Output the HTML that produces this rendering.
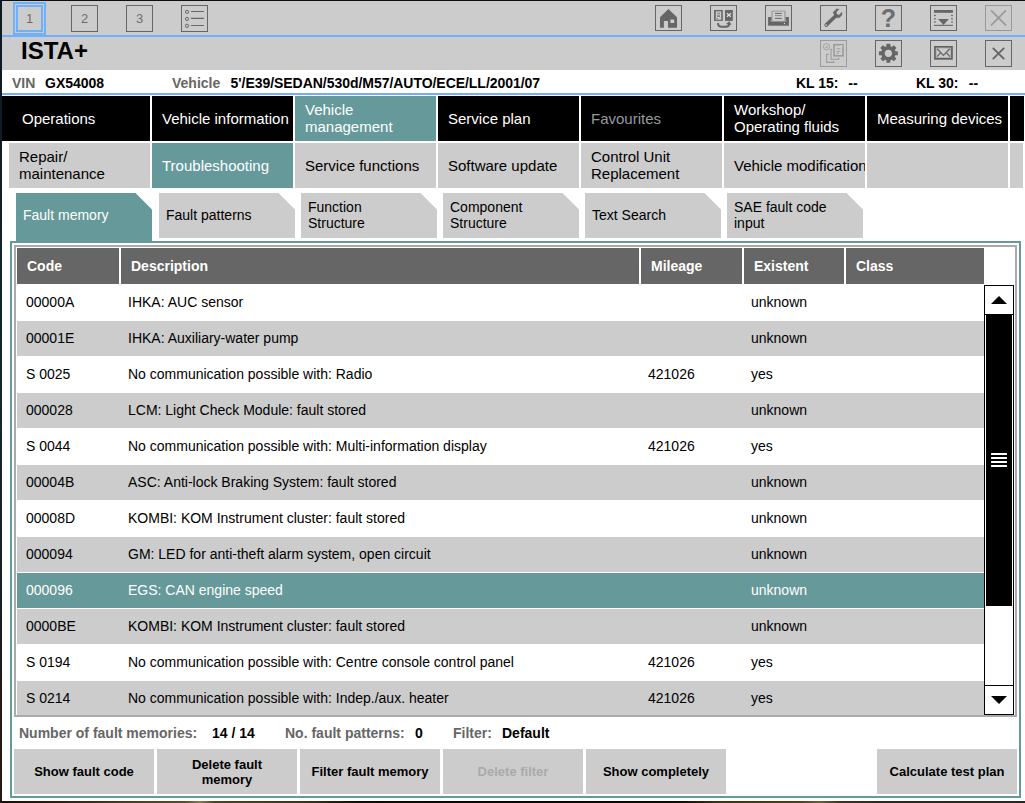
<!DOCTYPE html>
<html><head><meta charset="utf-8">
<style>
*{box-sizing:border-box;margin:0;padding:0}
html,body{width:1025px;height:803px;overflow:hidden;background:#fff}
body{position:relative;font-family:"Liberation Sans",Arial,sans-serif;color:#000;font-size:15px}
.abs{position:absolute}
#deskT{left:0;top:0;width:1025px;height:1px;background:#0a0f14}
#deskL{left:0;top:0;width:2px;height:803px;background:linear-gradient(180deg,#0e1820,#16262e 50%,#1c1c1c 80%,#26170f)}
#deskB{left:0;top:801px;width:1025px;height:2px;background:linear-gradient(90deg,#1a0f0a 0,#2a1c12 5%,#4a3a26 12%,#5a4a30 18%,#8a7a50 19.5%,#4a4428 21%,#36361e 30%,#0c0c08 35%,#060606 50%,#0a0a06 66%,#3a3418 70%,#4a4020 78%,#6a6038 80%,#3a3420 82%,#2a2a26 86%,#262624 100%)}
#top{left:2px;top:1px;width:1023px;height:69px;background:#ccc}
.bl{left:2px;width:1023px;height:2px;background:#6eb0fa}
.tb{position:absolute;width:27px;height:27px;border:1px solid #666;color:#6e6e6e;font-size:13px;text-align:center;line-height:26px}
.tb svg{position:absolute;left:-1px;top:-1px}
.tb.r1{top:5px;height:26px}
.tb.r2{top:40px}
#vin{left:2px;top:70px;width:1023px;height:24px;background:#fff;font-weight:bold;font-size:14px;line-height:26px}
#vin span{position:absolute;top:0;white-space:nowrap}
#vin .g{color:#666}
.n1,.n2{position:absolute;display:flex;align-items:center;line-height:17px;font-size:15px;white-space:nowrap}
.n1{top:96px;height:45px;background:#000;color:#fff;padding-left:20px;padding-bottom:2px}
.n2{top:143px;height:45px;background:#ccc;color:#000;padding-left:10px;padding-bottom:2px}
.sel{background:#669999 !important;color:#fff !important}
.tab{position:absolute;top:193px;height:45px;width:136px;background:#ccc;display:flex;align-items:center;padding-left:7px;font-size:14px;line-height:16px;white-space:nowrap;padding-bottom:2px;clip-path:polygon(0 0,119.5px 0,100% 16.5px,100% 100%,0 100%)}
.tab.sel{height:49px;padding-bottom:6px}
#panel{left:10px;top:241px;width:1011px;height:557px;border:2px solid #669999;background:#fff}
#tbl{left:14px;top:245px;width:1003px;height:472px;border:2px solid #aaa;background:#fff}
.th{position:absolute;top:248px;height:36px;background:#666;color:#fff;font-weight:bold;font-size:14px;line-height:36px;padding-left:10px}
.row{position:absolute;left:17px;width:967px;height:35px;font-size:14px;line-height:35px;white-space:nowrap}
.row.g{background:#ccc}
.row.s{background:#669999;color:#fff}
.row span{position:absolute;top:0}
.c1{left:9px}.c2{left:111px}.c3{left:631px}.c4{left:734px}
#sb{left:984px;top:285px;width:30px;height:430px;background:#fff;border:1px solid #000}
#st{left:986px;top:314px;width:26px;height:292px;background:#000}
.sbtn{position:absolute;left:984px;width:30px;height:30px;border:1px solid #000;background:#fff}
#stat{left:0;top:723px;width:1025px;height:20px;font-size:14px;font-weight:bold;line-height:20px}
#stat span{position:absolute;top:0;white-space:nowrap}
#stat .g{color:#666}
.btn{position:absolute;top:749px;height:45px;width:140px;background:#ccc;font-weight:bold;font-size:13px;line-height:15px;display:flex;align-items:center;justify-content:center;text-align:center}
.btn.d{color:#aaa}
</style></head><body>
<div class="abs" id="top"></div>
<div class="abs bl" style="top:35px"></div>
<div class="abs" id="deskT"></div>

<div class="abs" style="left:13px;top:2px;width:33px;height:33px;border:2px solid #6eb0fa"></div>
<div class="tb" style="left:16px;top:5px;border:2px solid #6eb0fa;line-height:24px">1</div>
<div class="tb" style="left:71px;top:5px">2</div>
<div class="tb" style="left:126px;top:5px">3</div>
<div class="tb" style="left:181px;top:5px"><svg width="27" height="27" viewBox="0 0 27 27"><g fill="none" stroke="#666" stroke-width="1"><circle cx="6" cy="6.9" r="1.6"/><circle cx="6" cy="13.9" r="1.6"/><circle cx="6" cy="20.8" r="1.6"/><path d="M10 6.5H23M10 13.4H23M10 20.5H23" stroke-width="1.2"/></g></svg></div>

<div class="tb r1" style="left:655px"><svg width="27" height="26" viewBox="0 0 27 26"><path d="M13.4 4 L22 12.3 V22.8 H13 V16 H8.9 V22.8 H5 V12.3Z M15.4 14.5 H19.2 V17.9 H15.4Z" fill="#666" fill-rule="evenodd"/></svg></div>
<div class="tb r1" style="left:710px"><svg width="27" height="26" viewBox="0 0 27 26"><rect x="4.1" y="5" width="8.7" height="10.9" fill="#666"/><rect x="5.8" y="6.3" width="5.4" height="8.4" fill="#ccc"/><path d="M7 8.2H10M7.2 10.3H10M7.2 11.5H10" stroke="#777" stroke-width="0.9"/><rect x="6.8" y="13" width="1" height="1" fill="#666"/><rect x="15" y="5" width="7.8" height="10.9" fill="#666"/><path d="M16.9 8.2L20.9 11.8M20.9 8.2L16.9 11.8" stroke="#ddd" stroke-width="1.3"/><path d="M8 18.1 Q8 21.7 11 21.7 H16 Q18.8 21.7 19.2 19" fill="none" stroke="#666" stroke-width="1.9"/><path d="M16 18.9 L19.4 16.3 L21.6 20Z" fill="#666"/></svg></div>
<div class="tb r1" style="left:765px"><svg width="27" height="26" viewBox="0 0 27 26"><rect x="3.1" y="12" width="20.8" height="8.7" fill="#666"/><rect x="6.3" y="5.5" width="14.4" height="10.5" rx="1" fill="#a0a0a0"/><rect x="7.7" y="6.6" width="11.6" height="9.4" fill="#ccc"/><path d="M10 8.4H16.8M10 13.4H16.8" stroke="#666" stroke-width="1"/><path d="M10 10.6H16.8" stroke="#888" stroke-width="1"/><rect x="5.6" y="15.6" width="15.8" height="0.9" fill="#bbb"/><rect x="18.9" y="18" width="1.1" height="1.1" fill="#ddd"/></svg></div>
<div class="tb r1" style="left:820px"><svg width="27" height="26" viewBox="0 0 27 26"><path d="M6.1 20.1 L15.6 11" stroke="#666" stroke-width="3.6" stroke-linecap="round"/><path d="M13.2 7.2 L16.6 4 L19 4.2 L16.2 7 L16.8 9.6 L19.2 10.2 L21.8 7.2 L21.8 10 L19.4 12.6 L15.6 12.6 Z" fill="#666" stroke="#666" stroke-width="0.6" stroke-linejoin="round"/><circle cx="6.1" cy="20.1" r="0.9" fill="#ccc"/></svg></div>
<div class="tb r1" style="left:875px;font-size:25px;font-weight:bold;line-height:25px">?</div>
<div class="tb r1" style="left:930px"><svg width="27" height="26" viewBox="0 0 27 26"><g fill="#666"><rect x="4" y="5" width="18.9" height="2.8"/><rect x="4" y="19.8" width="18.9" height="1.1"/><rect x="4" y="9.9" width="1.8" height="1.2"/><rect x="4" y="13.2" width="1.8" height="1.2"/><rect x="4" y="16.4" width="1.8" height="1.2"/><rect x="21.1" y="9.9" width="1.8" height="1.2"/><rect x="21.1" y="13.2" width="1.8" height="1.2"/><rect x="21.1" y="16.4" width="1.8" height="1.2"/><path d="M8 14.1H18.9L13.5 20Z"/></g></svg></div>
<div class="tb r1" style="left:985px;border-color:#999"><svg width="27" height="26" viewBox="0 0 27 26"><path d="M6 5.3L21 20.3M21 5.3L6 20.3" stroke="#999" stroke-width="1.7"/></svg></div>

<div class="tb r2" style="left:820px;border-color:#9c9c9c"><svg width="27" height="27" viewBox="0 0 27 27"><g fill="none" stroke="#9c9c9c"><circle cx="6.5" cy="6.7" r="3.1" stroke-width="0.9"/><path d="M5.2 7.6H7.2V5.8" stroke-width="0.8"/><rect x="14" y="4.7" width="9" height="11.1" stroke-width="1.6"/><path d="M16.4 8.8H20.4M16.4 11.3H20.4M16.4 13.2H19" stroke-width="0.9"/><path d="M12.3 9.3H11V19.3H18.8V17.4" stroke-width="1.1"/><path d="M8.8 14.4H6.6V22.4H13.7V20.8" stroke-width="1.1"/></g><path d="M20.2 5.5H22.2V7.5Z" fill="#ddd"/></svg></div>
<div class="tb r2" style="left:875px"><svg width="27" height="27" viewBox="0 0 27 27"><g transform="translate(13.4 13.3)"><g fill="#666"><rect x="-2" y="-9.5" width="4" height="19" rx="0.6" /><rect x="-2" y="-9.5" width="4" height="19" rx="0.6" transform="rotate(45)"/><rect x="-2" y="-9.5" width="4" height="19" rx="0.6" transform="rotate(90)"/><rect x="-2" y="-9.5" width="4" height="19" rx="0.6" transform="rotate(135)"/><circle r="7.2"/></g><circle r="3.6" fill="#ccc"/></g></svg></div>
<div class="tb r2" style="left:930px"><svg width="27" height="27" viewBox="0 0 27 27"><rect x="5" y="6.9" width="16.9" height="11.9" fill="none" stroke="#606060" stroke-width="1.8"/><rect x="6.2" y="8.1" width="14.5" height="9.5" fill="none" stroke="#aaa" stroke-width="0.8"/><path d="M7.1 8.8L13.4 15.4L19.8 8.8M7.1 16.6L10.6 12.6M19.8 16.6L16.4 12.6" fill="none" stroke="#666" stroke-width="1.3"/></svg></div>
<div class="tb r2" style="left:985px"><svg width="27" height="27" viewBox="0 0 27 27"><path d="M7.8 7.8L19.2 19.2M19.2 7.8L7.8 19.2" stroke="#666" stroke-width="1.9"/></svg></div>

<div class="abs" style="left:21px;top:36px;font-size:24px;font-weight:bold;line-height:30px">ISTA+</div>

<div class="abs" id="vin">
<span class="g" style="left:10px">VIN</span><span style="left:43px">GX54008</span>
<span class="g" style="left:170px">Vehicle</span><span style="left:228.5px;letter-spacing:-0.04px">5'/E39/SEDAN/530d/M57/AUTO/ECE/LL/2001/07</span>
<span style="left:794px">KL 15:&nbsp; <b style="margin-left:2px">--</b></span><span style="left:914px">KL 30:&nbsp; <b style="margin-left:2.5px">--</b></span>
</div>
<div class="abs bl" style="top:93px;height:2px"></div>

<div class="n1" style="padding-bottom:0;left:2px;width:148px;padding-left:20px">Operations</div>
<div class="n1" style="padding-bottom:0;left:152px;width:141px;padding-left:10px">Vehicle information</div>
<div class="n1 sel" style="left:295px;width:141px;padding-left:10px">Vehicle<br>management</div>
<div class="n1" style="padding-bottom:0;left:438px;width:141px;padding-left:10px">Service plan</div>
<div class="n1" style="padding-bottom:0;left:581px;width:141px;padding-left:10px;color:#999">Favourites</div>
<div class="n1" style="left:724px;width:141px;padding-left:10px">Workshop/<br>Operating fluids</div>
<div class="n1" style="padding-bottom:0;left:867px;width:141px;padding-left:10px">Measuring devices</div>
<div class="n1" style="padding-bottom:0;left:1010px;width:14px;padding:0"></div>

<div class="n2" style="left:9px;width:141px">Repair/<br>maintenance</div>
<div class="n2 sel" style="padding-bottom:0;left:152px;width:141px">Troubleshooting</div>
<div class="n2" style="padding-bottom:0;left:295px;width:141px">Service functions</div>
<div class="n2" style="padding-bottom:0;left:438px;width:141px">Software update</div>
<div class="n2" style="left:581px;width:141px">Control Unit<br>Replacement</div>
<div class="n2" style="padding-bottom:0;left:724px;width:141px;overflow:hidden">Vehicle modification</div>
<div class="n2" style="padding-bottom:0;left:867px;width:141px"></div>
<div class="n2" style="padding-bottom:0;left:1010px;width:13px;padding:0"></div>

<div class="tab sel" style="left:16px">Fault memory</div>
<div class="tab" style="left:159px">Fault patterns</div>
<div class="tab" style="left:301px">Function<br>Structure</div>
<div class="tab" style="left:443px">Component<br>Structure</div>
<div class="tab" style="left:585px">Text Search</div>
<div class="tab" style="left:727px">SAE fault code<br>input</div>

<div class="abs" id="panel"></div>
<div class="abs" id="tbl"></div>
<div class="th" style="left:17px;width:102px">Code</div>
<div class="th" style="left:121px;width:518px">Description</div>
<div class="th" style="left:641px;width:101px">Mileage</div>
<div class="th" style="left:744px;width:100px">Existent</div>
<div class="th" style="left:846px;width:138px">Class</div>

<div class="row" style="top:285px"><span class="c1">00000A</span><span class="c2">IHKA: AUC sensor</span><span class="c4">unknown</span></div>
<div class="row g" style="top:321px"><span class="c1">00001E</span><span class="c2">IHKA: Auxiliary-water pump</span><span class="c4">unknown</span></div>
<div class="row" style="top:357px"><span class="c1">S 0025</span><span class="c2">No communication possible with: Radio</span><span class="c3">421026</span><span class="c4">yes</span></div>
<div class="row g" style="top:393px"><span class="c1">000028</span><span class="c2">LCM: Light Check Module: fault stored</span><span class="c4">unknown</span></div>
<div class="row" style="top:429px"><span class="c1">S 0044</span><span class="c2">No communication possible with: Multi-information display</span><span class="c3">421026</span><span class="c4">yes</span></div>
<div class="row g" style="top:465px"><span class="c1">00004B</span><span class="c2">ASC: Anti-lock Braking System: fault stored</span><span class="c4">unknown</span></div>
<div class="row" style="top:501px"><span class="c1">00008D</span><span class="c2">KOMBI: KOM Instrument cluster: fault stored</span><span class="c4">unknown</span></div>
<div class="row g" style="top:537px"><span class="c1">000094</span><span class="c2">GM: LED for anti-theft alarm system, open circuit</span><span class="c4">unknown</span></div>
<div class="row s" style="top:573px"><span class="c1">000096</span><span class="c2">EGS: CAN engine speed</span><span class="c4">unknown</span></div>
<div class="row g" style="top:609px"><span class="c1">0000BE</span><span class="c2">KOMBI: KOM Instrument cluster: fault stored</span><span class="c4">unknown</span></div>
<div class="row" style="top:645px"><span class="c1">S 0194</span><span class="c2">No communication possible with: Centre console control panel</span><span class="c3">421026</span><span class="c4">yes</span></div>
<div class="row g" style="top:681px;height:34px"><span class="c1">S 0214</span><span class="c2">No communication possible with: Indep./aux. heater</span><span class="c3">421026</span><span class="c4">yes</span></div>

<div class="abs" id="sb"></div>
<div class="abs" id="st"></div>
<div class="sbtn" style="top:285px"><svg width="28" height="28"><path d="M6 18 L14 10 L22 18Z" fill="#000"/></svg></div>
<div class="sbtn" style="top:685px"><svg width="28" height="28"><path d="M6 10 L22 10 L14 18Z" fill="#000"/></svg></div>
<svg class="abs" style="left:991px;top:453px" width="16" height="14"><g fill="#fff"><rect x="0" y="0" width="16" height="2" rx="0.5"/><rect x="0" y="4" width="16" height="2" rx="0.5"/><rect x="0" y="8" width="16" height="2" rx="0.5"/><rect x="0" y="12" width="16" height="2" rx="0.5"/></g></svg>

<div class="abs" id="stat">
<span class="g" style="left:19px">Number of fault memories:</span><span style="left:212px">14 / 14</span>
<span class="g" style="left:285px">No. fault patterns:</span><span style="left:415px">0</span>
<span class="g" style="left:453px">Filter:</span><span style="left:502px">Default</span>
</div>

<div class="btn" style="left:14px">Show fault code</div>
<div class="btn" style="left:157px">Delete fault<br>memory</div>
<div class="btn" style="left:300px">Filter fault memory</div>
<div class="btn d" style="left:443px">Delete filter</div>
<div class="btn" style="left:586px">Show completely</div>
<div class="btn" style="left:877px">Calculate test plan</div>

<div class="abs" id="deskL"></div>
<div class="abs" id="deskB"></div>
</body></html>
